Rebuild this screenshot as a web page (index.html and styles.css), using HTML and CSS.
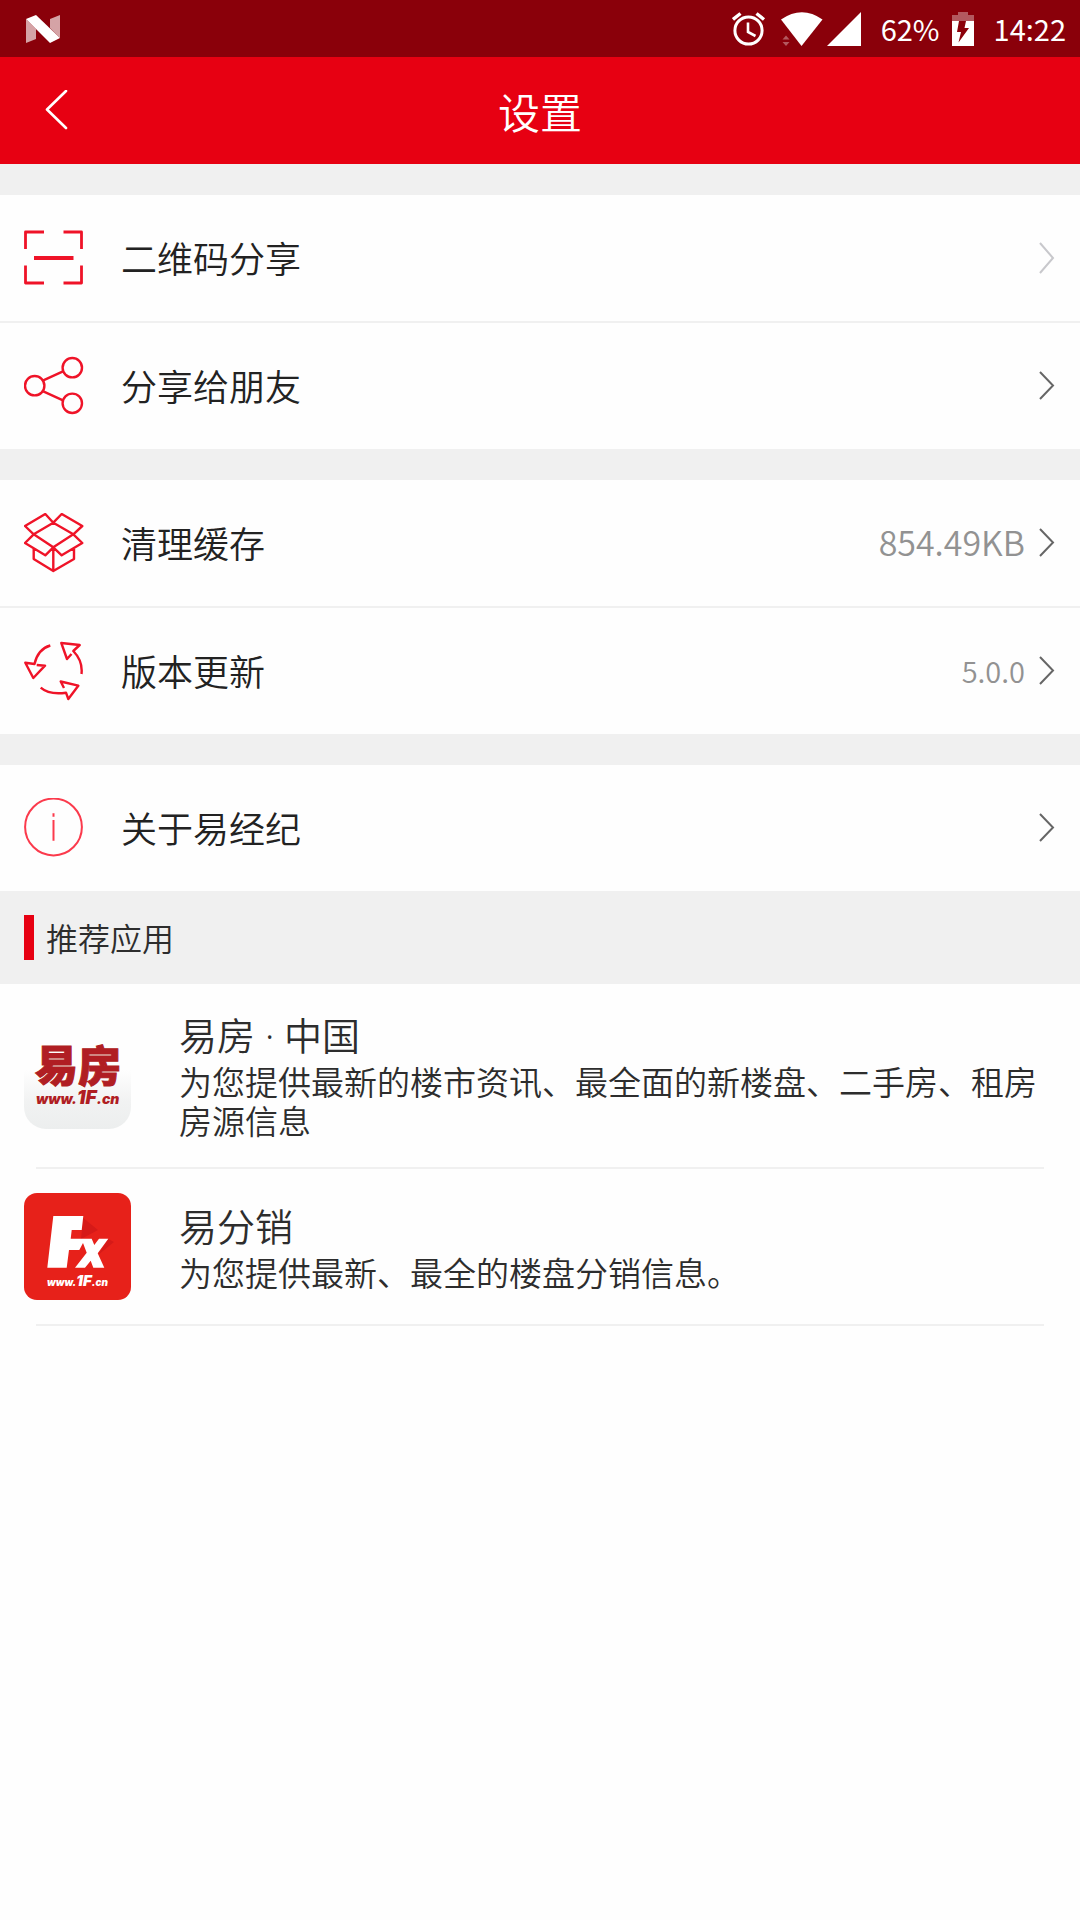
FILE: index.html
```html
<!DOCTYPE html>
<html lang="zh-CN">
<head>
  <meta charset="utf-8">
  <meta name="viewport" content="width=device-width, initial-scale=1">
  <title>设置</title>
  <link rel="stylesheet" href="styles.css">
</head>
<body>
  <div class="status">
    <svg class="status-n" width="34" height="28" viewBox="0 0 34 28" aria-hidden="true">
      <path d="M0 4 10 14V24L0 28ZM24 4 34 0V23L24 13Z" fill="#fff" opacity=".64"/>
      <path d="M0 4 10 0 34 23 24 28Z" fill="#fff"/>
    </svg>
    <div class="status-right">
      <svg width="34" height="34" viewBox="0 0 34 34" fill="none" stroke="#fff" aria-hidden="true">
        <circle cx="16.500" cy="18.500" r="13.600" stroke-width="3"/>
        <path d="M1 7.500 8.500 1.500M24.500 1.500 32 7.500" stroke-width="3.400"/>
        <path d="M16 10.500V20L23.500 24" stroke-width="2.600"/>
      </svg>
      <svg class="wifi" width="42" height="34" viewBox="0 0 42 34" fill="#fff" aria-hidden="true">
        <path d="M0 7.500Q21-7 41.500 7.500L20.500 34Z"/>
        <path d="M1.500 27.500 5 23.500 8.500 27.500ZM1.500 30H8.500L5 34Z" opacity=".35"/>
      </svg>
      <svg width="34" height="34" viewBox="0 0 34 34" aria-hidden="true"><path d="M34 0V34H0Z" fill="#fff"/></svg>
      <span class="battery-text">62%</span>
      <svg class="battery" width="22" height="34" viewBox="0 0 22 34" aria-hidden="true">
        <path d="M0 3H6V0H16V3H22V9H0Z" fill="#fff" opacity=".35"/>
        <path d="M0 9H22V34H0Z" fill="#fff"/>
        <path d="M7 9H14L12.500 16H17L6.500 30.500 9 20H5Z" fill="#8a000a"/>
      </svg>
      <time>14:22</time>
    </div>
  </div>

  <header class="bar">
    <button class="back" type="button" aria-label="返回">
      <svg width="24" height="42" viewBox="0 0 24 42" fill="none" stroke="#fff" stroke-width="2.600" stroke-linecap="round" stroke-linejoin="round" aria-hidden="true"><path d="M21 1 2 19.500 21 38"/></svg>
    </button>
    <h1>设置</h1>
  </header>

  <main>
    <ul class="group">
      <li><a class="row" href="#qr">
        <svg class="icon" viewBox="0 0 60 60" aria-hidden="true"><path d="M20 4H1.500V21M39.500 4H57.500V21M1.500 37.500V55H20M57.500 37.500V55H39.500" stroke-width="2.800"/><path d="M10 30H49.500" stroke-width="3.800" stroke-linecap="butt"/></svg>
        <span class="label">二维码分享</span>
        <svg class="chevron pale" viewBox="0 0 16 32" aria-hidden="true"><path d="M1 1 14 16 1 31"/></svg>
      </a></li>
      <li><a class="row" href="#share">
        <svg class="icon" viewBox="0 0 60 60" aria-hidden="true"><circle cx="10.700" cy="29.700" r="9.700"/><circle cx="48.300" cy="11.700" r="9.700"/><circle cx="48.300" cy="47.300" r="9.700"/><path d="M19.300 24.300 39 15.300M19.300 35.300 39 44.300"/></svg>
        <span class="label">分享给朋友</span>
        <svg class="chevron" viewBox="0 0 16 32" aria-hidden="true"><path d="M1 2 14 15.500 1 29"/></svg>
      </a></li>
    </ul>

    <ul class="group">
      <li><a class="row" href="#cache">
        <svg class="icon" viewBox="0 0 60 60" aria-hidden="true"><path d="M29.300 9.700 21.300 1 1 13 9.700 21.300 29.300 34.300 49.300 21.300 58.300 13 37.700 1 29.300 9.700 9.700 21.300 1 30 21.300 42.300 29.300 34.300 37.700 42.300 58.300 30 49.300 21.300 29.300 9.700M9.700 35.300V46L29.300 58 50 46V35.300M29.300 34.300V58"/></svg>
        <span class="label">清理缓存</span>
        <span class="value">854.49KB</span>
        <svg class="chevron" viewBox="0 0 16 32" aria-hidden="true"><path d="M1 2 14 15.500 1 29"/></svg>
      </a></li>
      <li><a class="row" href="#update">
        <svg class="icon" viewBox="0 0 60 60" aria-hidden="true"><path d="M57.500 33Q59 20 49.300 10L55.700 4 37.300 2 43 18 47.500 13M26.300 4.500Q14 8 10.500 23L1.300 21.700 9.300 37 21 24.700 12.700 24M16.700 46.700Q25 54 42 51.700L44.300 58 54.300 44.700 36.700 40.500 40 47"/></svg>
        <span class="label">版本更新</span>
        <span class="value small">5.0.0</span>
        <svg class="chevron" viewBox="0 0 16 32" aria-hidden="true"><path d="M1 2 14 15.500 1 29"/></svg>
      </a></li>
    </ul>

    <ul class="group">
      <li><a class="row" href="#about">
        <svg class="icon info" viewBox="0 0 60 60" aria-hidden="true"><circle cx="29.500" cy="29" r="28.400"/><path d="M29.500 15.300V18.700M29.500 22V42.700"/></svg>
        <span class="label">关于易经纪</span>
        <svg class="chevron" viewBox="0 0 16 32" aria-hidden="true"><path d="M1 2 14 15.500 1 29"/></svg>
      </a></li>
    </ul>

    <section>
      <h2 class="section-title">推荐应用</h2>
      <ul class="apps">
        <li><a class="app" href="#yifang">
          <svg class="logo" viewBox="0 0 107 107" role="img" aria-label="易房">
            <defs><linearGradient id="shade" x1="0" y1="0" x2="0" y2="1"><stop offset=".45" stop-color="#fefefe"/><stop offset=".75" stop-color="#f1f2f2"/><stop offset="1" stop-color="#eceeee"/></linearGradient></defs>
            <rect width="107" height="107" rx="22" fill="url(#shade)"/>
            <g fill="#b01e23">
              <text class="logo-cjk" x="11" y="60" font-size="43">易房</text>
              <text class="logo-latin" x="12" y="82" font-size="14">www.<tspan font-size="19">1F</tspan>.cn</text>
            </g>
          </svg>
          <div class="app-text">
            <h3>易房 · 中国</h3>
            <p>为您提供最新的楼市资讯、最全面的新楼盘、二手房、租房房源信息</p>
          </div>
        </a></li>
        <li><a class="app" href="#yifenxiao">
          <svg class="logo" viewBox="0 0 107 107" role="img" aria-label="易分销">
            <rect width="107" height="107" rx="13" fill="#e7211a"/>
            <path d="M59.300 25 74 37 57 46ZM84.300 46 90 49 74 62Z" fill="#d61a18"/>
            <path d="M29.300 23H59.300L57.700 37H47.700L46.700 45.700H67.700L70.300 52 75 45.700H84.300L73.700 60.300 80.300 74.700H69.300L66.700 67.700 61 74.700H51L62.700 59.700 59 50 55.300 57H45L42.700 74.700H23.300Z" fill="#fff"/>
            <text class="logo-latin" x="23" y="93" font-size="10" fill="#fff">www.<tspan font-size="15">1F</tspan>.cn</text>
          </svg>
          <div class="app-text">
            <h3>易分销</h3>
            <p>为您提供最新、最全的楼盘分销信息。</p>
          </div>
        </a></li>
      </ul>
    </section>
  </main>
</body>
</html>
```

FILE: styles.css
```css
* {
  box-sizing: border-box;
  margin: 0;
  padding: 0;
}

body {
  background: #fefefe;
  color: #222;
  font-family: "Noto Sans CJK SC", "Noto Sans", sans-serif;
  font-weight: 350;
}

svg {
  display: block;
  flex: none;
}

ul {
  list-style: none;
}

a {
  color: inherit;
  text-decoration: none;
}

/* System status bar */
.status {
  display: flex;
  align-items: center;
  justify-content: space-between;
  height: 57px;
  padding: 0 14px 0 26px;
  background: #8a000a;
  color: #fff;
  font-size: 29px;
  font-weight: 400;
  line-height: 40px;
}

.status-right {
  display: flex;
  align-items: center;
}

.status-right span,
.status-right time {
  padding-bottom: 2px;
}

.wifi {
  margin: 0 4px 0 15px;
}

.battery-text {
  margin-left: 20px;
}

.battery {
  margin: 0 20px 0 12px;
}

/* Title bar */
.bar {
  display: grid;
  grid-template-columns: 112px 1fr 112px;
  align-items: center;
  height: 107px;
  background: #e70012;
  color: #fff;
}

.back {
  height: 100%;
  padding-left: 45px;
  border: 0;
  background: none;
}

.bar h1 {
  font-size: 42px;
  font-weight: inherit;
  line-height: 60px;
  text-align: center;
}

/* Setting rows */
.group {
  border-top: 31px solid #f0f0f0;
}

.group li + li {
  border-top: 2px solid #f0f0f0;
}

.row {
  display: flex;
  align-items: center;
  height: 126px;
  padding: 0 25px 0 24px;
}

.icon {
  width: 60px;
  height: 60px;
  margin-right: 37px;
  fill: none;
  stroke: #ef1328;
  stroke-width: 2.4;
  stroke-linejoin: round;
}

.icon.info {
  stroke: #fb3a4c;
  stroke-width: 2;
}

.label,
.value {
  padding-bottom: 2px;
}

.label {
  flex: 1;
  font-size: 36px;
  line-height: 52px;
}

.value {
  color: #929292;
  font-size: 34px;
  line-height: 48px;
}

.value.small {
  font-size: 29px;
}

.chevron {
  width: 16px;
  height: 32px;
  margin-left: 14px;
  fill: none;
  stroke: #666;
  stroke-width: 2;
}

.chevron.pale {
  stroke: #c8c8cc;
}

/* Recommended apps */
.section-title {
  display: flex;
  align-items: center;
  gap: 12px;
  padding: 24px;
  background: #f0f0f0;
  color: #2d2d2d;
  font-size: 32px;
  font-weight: inherit;
  line-height: 45px;
}

.section-title::before {
  content: "";
  width: 10px;
  height: 45px;
  background: #e70012;
}

.apps li::after {
  content: "";
  display: block;
  height: 2px;
  margin: 0 36px;
  background: #f0f0f0;
}

.app {
  display: flex;
  align-items: center;
  gap: 48px;
  padding: 24px;
  color: #2d2d2d;
}

.logo {
  width: 107px;
  height: 107px;
}

.logo-cjk {
  font-weight: 900;
  stroke: #b01e23;
  stroke-width: 1;
}

.logo-latin {
  font-family: Inter, sans-serif;
  font-style: italic;
  font-weight: 900;
}

.app-text {
  flex: 1;
  padding-bottom: 2px;
  font-family: "Noto Sans", "Noto Sans CJK SC", sans-serif;
}

.app h3 {
  font-size: 38px;
  font-weight: inherit;
  line-height: 55px;
}

.app p {
  font-size: 33px;
  line-height: 39px;
}
```
